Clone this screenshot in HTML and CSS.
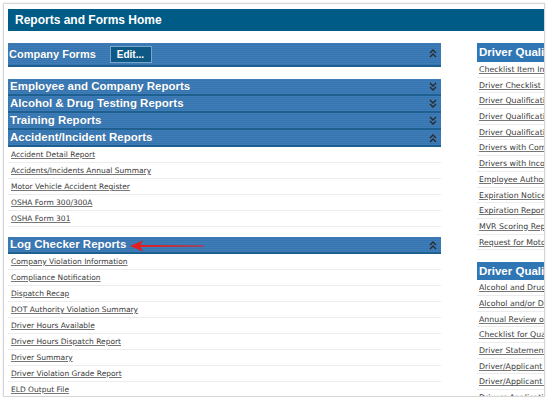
FILE: index.html
```html
<!DOCTYPE html>
<html>
<head>
<meta charset="utf-8">
<link rel="stylesheet" href="styles.css">
</head>
<body>
<div class="frame">
  <div class="title">Reports and Forms Home</div>
  <div class="cols">
    <div class="left">
      <div class="bar bar-lg">
        <span class="bar-label">Company Forms</span>
        <span class="edit">Edit...</span>
        <svg class="chev" width="8" height="10" viewBox="0 0 8 10"><polyline points="1,5 4,2 7,5"/><polyline points="1,9 4,6 7,9"/></svg>
      </div>

      <div class="group">
        <div class="bar"><span class="bar-label">Employee and Company Reports</span>
          <svg class="chev" width="8" height="10" viewBox="0 0 8 10"><polyline points="1,1 4,4 7,1"/><polyline points="1,5 4,8 7,5"/></svg></div>
        <div class="bar"><span class="bar-label">Alcohol &amp; Drug Testing Reports</span>
          <svg class="chev" width="8" height="10" viewBox="0 0 8 10"><polyline points="1,1 4,4 7,1"/><polyline points="1,5 4,8 7,5"/></svg></div>
        <div class="bar"><span class="bar-label">Training Reports</span>
          <svg class="chev" width="8" height="10" viewBox="0 0 8 10"><polyline points="1,1 4,4 7,1"/><polyline points="1,5 4,8 7,5"/></svg></div>
        <div class="bar"><span class="bar-label">Accident/Incident Reports</span>
          <svg class="chev" width="8" height="10" viewBox="0 0 8 10"><polyline points="1,5 4,2 7,5"/><polyline points="1,9 4,6 7,9"/></svg></div>
        <ul class="links">
          <li><a>Accident Detail Report</a></li>
          <li><a>Accidents/Incidents Annual Summary</a></li>
          <li><a>Motor Vehicle Accident Register</a></li>
          <li><a>OSHA Form 300/300A</a></li>
          <li><a>OSHA Form 301</a></li>
        </ul>
      </div>

      <div class="group group-log">
        <div class="bar bar-log"><span class="bar-label">Log Checker Reports</span>
          <svg class="arrow" width="76" height="12" viewBox="0 0 76 12"><polygon points="0,6 13,0.5 10.5,5 74,5.6 74,6.4 10.5,7 13,11.5"/></svg>
          <svg class="chev" width="8" height="10" viewBox="0 0 8 10"><polyline points="1,5 4,2 7,5"/><polyline points="1,9 4,6 7,9"/></svg></div>
        <ul class="links">
          <li><a>Company Violation Information</a></li>
          <li><a>Compliance Notification</a></li>
          <li><a>Dispatch Recap</a></li>
          <li><a>DOT Authority Violation Summary</a></li>
          <li><a>Driver Hours Available</a></li>
          <li><a>Driver Hours Dispatch Report</a></li>
          <li><a>Driver Summary</a></li>
          <li><a>Driver Violation Grade Report</a></li>
          <li><a>ELD Output File</a></li>
        </ul>
      </div>
    </div>

    <div class="right">
      <div class="rhead">Driver Qualification Forms</div>
      <ul class="links rlinks">
        <li><a>Checklist Item Information</a></li>
        <li><a>Driver Checklist Items</a></li>
        <li><a>Driver Qualification File</a></li>
        <li><a>Driver Qualification Status</a></li>
        <li><a>Driver Qualification Summary</a></li>
        <li><a>Drivers with Complete Files</a></li>
        <li><a>Drivers with Incomplete Files</a></li>
        <li><a>Employee Authorization</a></li>
        <li><a>Expiration Notice</a></li>
        <li><a>Expiration Report</a></li>
        <li><a>MVR Scoring Report</a></li>
        <li><a>Request for Motor Vehicle Record</a></li>
      </ul>
      <div class="rhead rhead2">Driver Qualification Letters</div>
      <ul class="links rlinks">
        <li><a>Alcohol and Drug Letter</a></li>
        <li><a>Alcohol and/or Drug Request</a></li>
        <li><a>Annual Review of Driving Record</a></li>
        <li><a>Checklist for Qualification</a></li>
        <li><a>Driver Statement</a></li>
        <li><a>Driver/Applicant Information</a></li>
        <li><a>Driver/Applicant Statement</a></li>
        <li><a>Drivers Application</a></li>
      </ul>
    </div>
  </div>
</div>
</body>
</html>
```

FILE: styles.css
```css
html, body {
  margin: 0;
  padding: 0;
  background: #ffffff;
}
.frame {
  margin: 3px 0 0 3px;
  width: 542px;
  height: 394px;
  border: 1px solid #d6d6d6;
  box-shadow: 0 0 2px rgba(0,0,0,0.12);
  overflow: hidden;
  padding: 5px 0 0 4px;
  box-sizing: border-box;
  background: #fff;
  font-family: "Liberation Sans", Arial, sans-serif;
}
.title {
  width: 560px;
  height: 22px;
  background: #005b86;
  color: #fff;
  font-weight: bold;
  font-size: 12px;
  line-height: 22px;
  padding-left: 7px;
  box-sizing: border-box;
}
.cols {
  display: flex;
  gap: 36px;
  margin-top: 12px;
  width: 700px;
}
.left {
  width: 433px;
  flex: none;
}
.bar {
  position: relative;
  display: flex;
  align-items: center;
  height: 17px;
  box-sizing: border-box;
  border-bottom: 2px solid #1d5f8f;
  background: repeating-linear-gradient(to bottom, #3f7db8 0, #3f7db8 1px, #3675b0 1px, #3675b0 2px);
  color: #fff;
  font-weight: bold;
  font-size: 11.5px;
  padding-left: 2px;
}
.bar-label {
  white-space: nowrap;
  line-height: 15px;
  text-shadow: 0 0 1px rgba(0,0,0,0.2);
}
.bar-lg {
  height: 24px;
  padding-left: 1px;
  font-size: 11px;
}
.edit {
  margin-left: 14px;
  height: 17px;
  width: 42px;
  box-sizing: border-box;
  background: #0d5884;
  border: 1px solid #7aa5cb;
  color: #fff;
  font-size: 10px;
  line-height: 15px;
  padding-left: 6px;
}
.chev {
  position: absolute;
  right: 4px;
  top: 50%;
  margin-top: -5px;
  fill: none;
  stroke: #2a2a2a;
  stroke-width: 1.4;
}
.bar-lg .chev { margin-top: -6px; }
.group {
  margin-top: 12px;
}
.group-log {
  margin-top: 10px;
}
.arrow {
  position: absolute;
  left: 122px;
  top: 3px;
  fill: #e41e1e;
}
.links {
  list-style: none;
  margin: 0;
  padding: 0;
}
.links li {
  height: 16px;
  box-sizing: border-box;
  border-bottom: 1px solid #ececec;
  font-family: "DejaVu Sans", Verdana, sans-serif;
  font-size: 7.5px;
  line-height: 16px;
  padding-left: 3px;
  white-space: nowrap;
  overflow: hidden;
}
.links a {
  color: #3a3a3a;
  text-decoration: underline;
  text-decoration-color: #777;
}
.right {
  width: 160px;
  flex: none;
}
.rhead {
  height: 19px;
  background: #2f76b5;
  color: #fff;
  font-weight: bold;
  font-size: 11.5px;
  line-height: 19px;
  padding-left: 2px;
  white-space: nowrap;
  box-sizing: border-box;
}
.rlinks li {
  height: 15.7px;
  line-height: 15.7px;
  padding-left: 2px;
  font-size: 7.8px;
}
.rhead2 {
  margin-top: 12px;
  height: 18px;
  line-height: 18px;
}
```
